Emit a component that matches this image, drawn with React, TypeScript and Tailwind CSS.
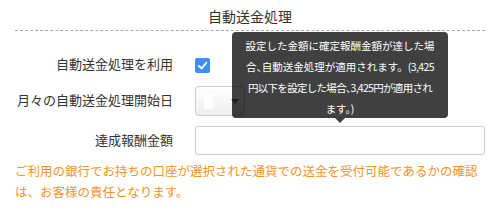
import React from "react"

const font = { fontFamily: '"Open Sans", "Noto Sans CJK JP", sans-serif' }

function Label({ children }: { children: React.ReactNode }) {
  return <div className="w-[158px] shrink-0 text-right text-[13px] text-[#333]">{children}</div>
}

export default function App() {
  return (
    <div className="relative w-[500px] h-[210px] bg-white px-[15px]" style={font}>
      <div className="h-[31px] border-b border-dashed border-[#aaa] pt-[6px] text-center text-[14px] text-[#333]">
        自動送金処理
      </div>

      <div className="mt-[19px] flex h-[30px] items-center">
        <Label>自動送金処理を利用</Label>
        <div className="ml-[22px] flex h-[15px] w-[15px] items-center justify-center rounded-[2px] bg-[#3f8ff0]">
          <svg width="11" height="11" viewBox="0 0 12 12">
            <path d="M2 6.5 L5 9.2 L10.2 3" fill="none" stroke="white" strokeWidth="2" strokeLinecap="round" strokeLinejoin="round" />
          </svg>
        </div>
      </div>

      <div className="mt-[6px] flex h-[30px] items-center">
        <Label>月々の自動送金処理開始日</Label>
        <div className="ml-[22px] flex h-[30px] w-[50px] items-center justify-between rounded-[4px] border border-[#ccc] bg-gradient-to-b from-white to-[#eee] pl-[8px] pr-[5px]">
          <div className="h-[15px] w-[9px] bg-white" />
          <div className="h-0 w-0 border-x-[4px] border-t-[5px] border-x-transparent border-t-[#777]" />
        </div>
      </div>

      <div className="mt-[10px] flex h-[29px] items-center">
        <Label>達成報酬金額</Label>
        <div className="ml-[22px] h-[29px] flex-1 rounded-[3px] border border-[#ccc] bg-white" />
      </div>

      <div className="mt-[6px] text-[12.5px] leading-[21px] text-[#f7931e]">
        ご利用の銀行でお持ちの口座が選択された通貨での送金を受付可能であるかの確認
        <br />
        は、お客様の責任となります。
      </div>

      <div className="absolute left-[232px] top-[32px] h-[86px] w-[216px] whitespace-nowrap rounded-[4px] bg-black/75 pt-[3px] text-center text-[10.5px] leading-[21px] text-white [font-family:'Noto_Sans_CJK_JP',sans-serif]">
        設定した金額に確定報酬金額が達した場
        <br />
        合<span className="[font-feature-settings:'palt']">、</span>自動送金処理が適用されます。<span className="tracking-[-0.6px]">(3,425</span>
        <br />
        <span className="tracking-[-0.7px]">
          円以下を設定した場合<span className="[font-feature-settings:'palt']">、</span>3,425円が適用され
        </span>
        <br />
        ます。)
        <div className="absolute left-1/2 top-full h-0 w-0 -translate-x-1/2 border-x-[5px] border-t-[5px] border-x-transparent border-t-black/75" />
      </div>
    </div>
  )
}
